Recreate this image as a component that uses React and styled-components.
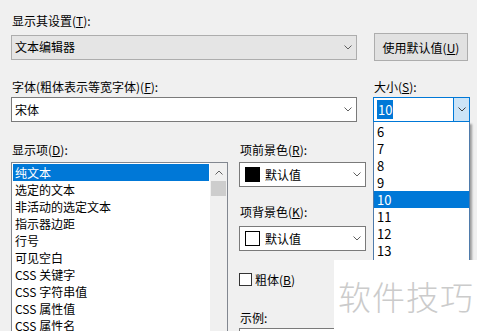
import styled, { createGlobalStyle } from "styled-components";

const GlobalStyle = createGlobalStyle`
  html, body {
    margin: 0;
    padding: 0;
  }
  body {
    background: #f0f0f0;
    font-family: "Noto Sans CJK SC", "Noto Sans", sans-serif;
    font-size: 12px;
    color: #000;
  }
`;

const Dialog = styled.div`
  position: relative;
  width: 477px;
  height: 331px;
  overflow: hidden;
  box-sizing: border-box;
  padding: 13px 0 0 11px;
`;

const Label = styled.div`
  height: 16px;
  line-height: 16px;
  padding-left: 1px;
  margin-bottom: ${(p) => p.$gap ?? 4}px;
  margin-top: ${(p) => p.$top ?? 0}px;
  white-space: nowrap;
`;

const Row = styled.div`
  display: flex;
  align-items: ${(p) => p.$align || "flex-start"};
  gap: ${(p) => p.$gap}px;
  margin-top: ${(p) => p.$top ?? 0}px;
`;

const Field = styled.div`
  display: flex;
  flex-direction: column;
  width: ${(p) => p.$width}px;
`;

const Combo = styled.div`
  position: relative;
  display: flex;
  align-items: center;
  box-sizing: border-box;
  width: ${(p) => p.$width}px;
  height: 25px;
  padding-left: ${(p) => p.$pad ?? 3}px;
  border: 1px solid ${(p) => (p.$readonly ? "#adadad" : "#7a7a7a")};
  background: ${(p) => (p.$readonly ? "#e5e5e5" : "#fff")};
  white-space: nowrap;
`;

const ComboText = styled.span`
  flex: 1;
  line-height: 16px;
`;

const ArrowBox = styled.span`
  display: flex;
  align-items: center;
  justify-content: center;
  width: 17px;
  align-self: stretch;
  color: #606060;
`;

const SizeCombo = styled.div`
  position: relative;
  display: flex;
  align-items: center;
  box-sizing: border-box;
  width: 97px;
  height: 25px;
  padding-left: 3px;
  border: 1px solid #0078d7;
  background: #fff;
`;

const Selected = styled.span`
  flex: 1;
  font-size: 13px;
  line-height: 15px;
  span {
    background: #0078d7;
    color: #fff;
    padding: 0 1px;
  }
`;

const DropButton = styled.span`
  display: flex;
  align-items: center;
  justify-content: center;
  width: 15px;
  align-self: stretch;
  background: #cce4f7;
  border-left: 1px solid #0078d7;
  color: #404040;
`;

const DropList = styled.div`
  position: absolute;
  left: -1px;
  top: 24px;
  box-sizing: border-box;
  width: 97px;
  height: 142px;
  padding-top: 1px;
  background: #fff;
  border: 1px solid #4f7bab;
  border-top: none;
  box-shadow: 2px 2px 2px rgba(0, 0, 0, 0.35);
  z-index: 2;
`;

const DropItem = styled.div`
  height: 17px;
  line-height: 17px;
  padding-left: 3px;
  font-size: 13px;
  background: ${(p) => (p.$active ? "#0078d7" : "transparent")};
  color: ${(p) => (p.$active ? "#fff" : "#000")};
`;

const Button = styled.div`
  box-sizing: border-box;
  width: 94px;
  height: 28px;
  display: flex;
  align-items: center;
  justify-content: center;
  background: #e1e1e1;
  border: 1px solid #adadad;
  white-space: nowrap;
`;

const ListBox = styled.div`
  display: flex;
  box-sizing: border-box;
  width: 217px;
  height: 200px;
  background: #fff;
  border: 1px solid #828790;
`;

const Items = styled.div`
  flex: 1;
  padding: 1px;
`;

const Item = styled.div`
  height: 17px;
  line-height: 17px;
  padding-left: 2px;
  white-space: nowrap;
  background: ${(p) => (p.$active ? "#0078d7" : "transparent")};
  color: ${(p) => (p.$active ? "#fff" : "#000")};
`;

const ScrollBar = styled.div`
  width: 17px;
  background: #f0f0f0;
  display: flex;
  flex-direction: column;
`;

const ScrollArrow = styled.div`
  height: 18px;
  display: flex;
  align-items: center;
  justify-content: center;
  color: #606060;
`;

const Thumb = styled.div`
  margin: 0 1px;
  height: 15px;
  background: #cdcdcd;
`;

const Side = styled.div`
  display: flex;
  flex-direction: column;
`;

const Swatch = styled.span`
  box-sizing: border-box;
  width: 15px;
  height: 15px;
  margin-right: 5px;
  background: ${(p) => p.$color};
  border: 1px solid #000;
`;

const CheckRow = styled.label`
  display: flex;
  align-items: center;
  height: 16px;
  margin-top: 20px;
`;

const CheckBox = styled.span`
  box-sizing: border-box;
  width: 13px;
  height: 13px;
  margin-right: 3px;
  background: #fff;
  border: 1px solid #333;
`;

const Sample = styled.div`
  box-sizing: border-box;
  width: 230px;
  height: 40px;
  background: #fff;
  border: 1px solid #7a7a7a;
`;

const Watermark = styled.div`
  position: absolute;
  left: 334px;
  top: 260px;
  width: 143px;
  height: 71px;
  background: #fff;
  display: flex;
  align-items: center;
  padding-left: 4px;
  box-sizing: border-box;
  font-size: 33px;
  font-weight: 300;
  letter-spacing: 1px;
  color: #cbcbcb;
  white-space: nowrap;
  z-index: 3;
`;

const Chevron = ({ up }) => (
  <svg width="8" height="5" viewBox="0 0 8 5">
    <polyline
      points={up ? "0.5,4.5 4,1 7.5,4.5" : "0.5,0.5 4,4 7.5,0.5"}
      fill="none"
      stroke="currentColor"
      strokeWidth="1"
    />
  </svg>
);

const items = [
  "纯文本",
  "选定的文本",
  "非活动的选定文本",
  "指示器边距",
  "行号",
  "可见空白",
  "CSS 关键字",
  "CSS 字符串值",
  "CSS 属性值",
  "CSS 属性名",
];

const sizes = ["6", "7", "8", "9", "10", "11", "12", "13"];

export default function App() {
  return (
    <>
      <GlobalStyle />
      <Dialog>
        <Label>
          显示其设置(<u>T</u>):
        </Label>
        <Row $gap={17} $align="center">
          <Combo $width={346} $readonly>
            <ComboText>文本编辑器</ComboText>
            <ArrowBox>
              <Chevron />
            </ArrowBox>
          </Combo>
          <Button>
            使用默认值(<u>U</u>)
          </Button>
        </Row>

        <Row $gap={16} $top={18}>
          <Field $width={346}>
            <Label $gap={2}>
              字体(粗体表示等宽字体)(<u>F</u>):
            </Label>
            <Combo $width={346}>
              <ComboText>宋体</ComboText>
              <ArrowBox>
                <Chevron />
              </ArrowBox>
            </Combo>
          </Field>
          <Field $width={97}>
            <Label $gap={2}>
              大小(<u>S</u>):
            </Label>
            <SizeCombo>
              <Selected>
                <span>10</span>
              </Selected>
              <DropButton>
                <Chevron />
              </DropButton>
              <DropList>
                {sizes.map((s) => (
                  <DropItem key={s} $active={s === "10"}>
                    {s}
                  </DropItem>
                ))}
              </DropList>
            </SizeCombo>
          </Field>
        </Row>

        <Row $gap={11} $top={20}>
          <Field $width={217}>
            <Label>
              显示项(<u>D</u>):
            </Label>
            <ListBox>
              <Items>
                {items.map((it, i) => (
                  <Item key={it} $active={i === 0}>
                    {it}
                  </Item>
                ))}
              </Items>
              <ScrollBar>
                <ScrollArrow>
                  <Chevron up />
                </ScrollArrow>
                <Thumb />
              </ScrollBar>
            </ListBox>
          </Field>
          <Side>
            <Label>
              项前景色(<u>R</u>):
            </Label>
            <Combo $width={127} $pad={5}>
              <Swatch $color="#000" />
              <ComboText>默认值</ComboText>
              <ArrowBox>
                <Chevron />
              </ArrowBox>
            </Combo>
            <Label $top={17} $gap={6}>
              项背景色(<u>K</u>):
            </Label>
            <Combo $width={127} $pad={5}>
              <Swatch $color="#fff" />
              <ComboText>默认值</ComboText>
              <ArrowBox>
                <Chevron />
              </ArrowBox>
            </Combo>
            <CheckRow>
              <CheckBox />
              粗体(<u>B</u>)
            </CheckRow>
            <Label $top={23} $gap={2}>
              示例:
            </Label>
            <Sample />
          </Side>
        </Row>

        <Watermark>软件技巧</Watermark>
      </Dialog>
    </>
  );
}
